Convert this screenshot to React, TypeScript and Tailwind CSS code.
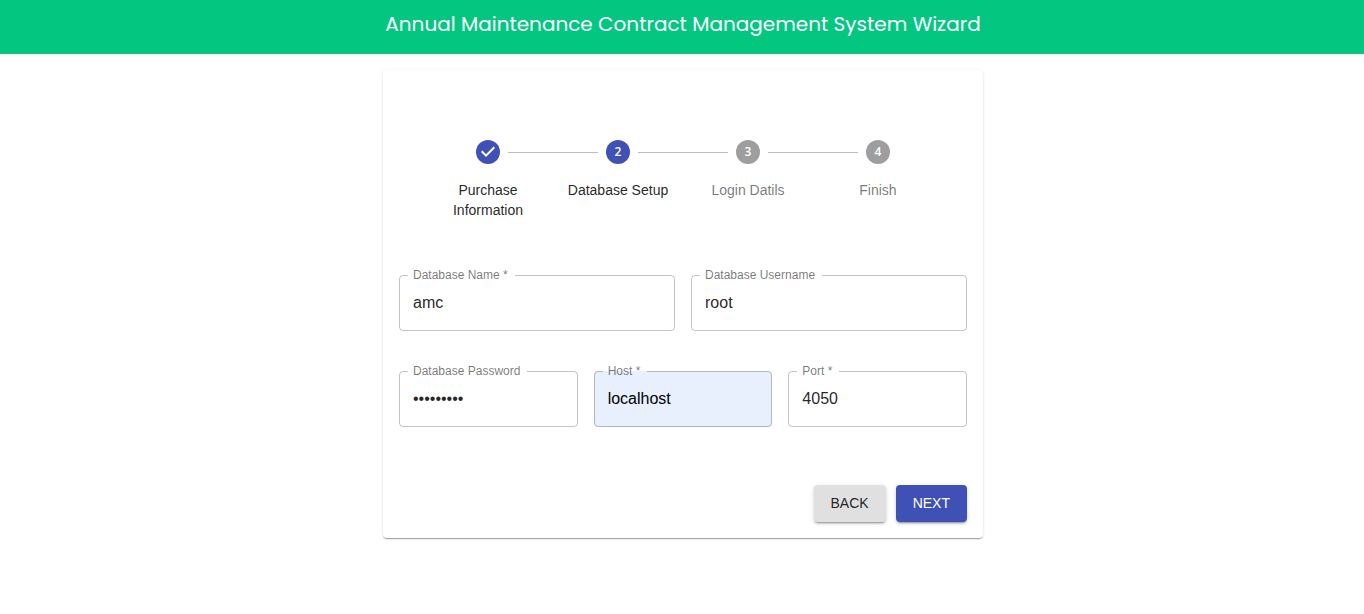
import { useId } from "react";

type StepState = "done" | "active" | "pending";

const steps: { label: string; state: StepState }[] = [
  { label: "Purchase Information", state: "done" },
  { label: "Database Setup", state: "active" },
  { label: "Login Datils", state: "pending" },
  { label: "Finish", state: "pending" },
];

function Step({ index, label, state }: { index: number; label: string; state: StepState }) {
  const pending = state === "pending";
  return (
    <li className="flex min-w-0 flex-1 flex-col items-center gap-4" aria-current={state === "active" ? "step" : undefined}>
      <div className="flex w-full items-center">
        <span className={`mr-2 h-px flex-1 ${index === 0 ? "" : "bg-[#bdbdbd]"}`} />
        <span
          className={`flex size-6 items-center justify-center rounded-full font-['Open_Sans',sans-serif] text-xs font-semibold text-white ${
            pending ? "bg-[#9e9e9e]" : "bg-[#3f51b5]"
          }`}
        >
          {state === "done" ? (
            <svg viewBox="0 0 24 24" className="size-6" fill="currentColor" aria-hidden="true">
              <path d="M10 17l-5-5 1.4-1.4 3.6 3.6 7.6-7.6L19 8l-9 9z" />
            </svg>
          ) : (
            index + 1
          )}
        </span>
        <span className={`ml-2 h-px flex-1 ${index === steps.length - 1 ? "" : "bg-[#bdbdbd]"}`} />
      </div>
      <span className={`px-2 text-center text-sm leading-5 ${pending ? "text-black/54" : "text-black/87"}`}>{label}</span>
    </li>
  );
}

type FieldProps = {
  label: string;
  value: string;
  type?: string;
  required?: boolean;
  filled?: boolean;
};

function Field({ label, value, type = "text", required, filled }: FieldProps) {
  const id = useId();
  return (
    <fieldset
      className={`min-w-0 rounded border px-2 pb-[5px] ${filled ? "border-[#b0b8c8] bg-[#e8f0fe]" : "border-black/23"}`}
    >
      <legend className="pr-[7px] pl-[5px] text-xs leading-3 text-black/54">
        <label htmlFor={id} className="block">
          {label}
          {required && " *"}
        </label>
      </legend>
      <input
        id={id}
        type={type}
        defaultValue={value}
        required={required}
        className={`block h-11 w-full bg-transparent px-[5px] text-base outline-none ${filled ? "text-black" : "text-black/87"}`}
      />
    </fieldset>
  );
}

const buttonBase =
  "rounded px-[17px] pt-2 pb-[9px] text-sm leading-5 uppercase shadow-[0_3px_1px_-2px_rgba(0,0,0,0.2),0_2px_2px_0_rgba(0,0,0,0.14),0_1px_5px_0_rgba(0,0,0,0.12)]";

export default function App() {
  return (
    <div className="font-['Liberation_Sans',Arial,sans-serif]">
      <header className="bg-[#03c781] pt-2 pr-4 pb-3.5 pl-[18px] text-center">
        <h1 className="font-['Poppins','Inter',sans-serif] text-xl leading-8 text-white">
          Annual Maintenance Contract Management System Wizard
        </h1>
      </header>
      <main className="flex justify-center py-4 pl-0.5">
        <form
          className="w-full max-w-[600px] rounded bg-white px-4 pt-[70px] pb-4 shadow-[0_2px_1px_-1px_rgba(0,0,0,0.2),0_1px_1px_0_rgba(0,0,0,0.14),0_1px_3px_0_rgba(0,0,0,0.12)]"
          onSubmit={(event) => event.preventDefault()}
        >
          <ol className="flex px-6">
            {steps.map((step, index) => (
              <Step key={step.label} index={index} label={step.label} state={step.state} />
            ))}
          </ol>
          <div className="mt-[49px] grid grid-cols-2 gap-4">
            <Field label="Database Name" value="amc" required />
            <Field label="Database Username" value="root" />
          </div>
          <div className="mt-[34px] grid grid-cols-3 gap-4">
            <Field label="Database Password" value="password1" type="password" />
            <Field label="Host" value="localhost" required filled />
            <Field label="Port" value="4050" required />
          </div>
          <div className="mt-[58px] flex justify-end gap-2.5">
            <button type="button" className={`${buttonBase} bg-[#e0e0e0] text-black/87`}>
              Back
            </button>
            <button type="submit" className={`${buttonBase} bg-[#3f51b5] text-white`}>
              Next
            </button>
          </div>
        </form>
      </main>
    </div>
  );
}
